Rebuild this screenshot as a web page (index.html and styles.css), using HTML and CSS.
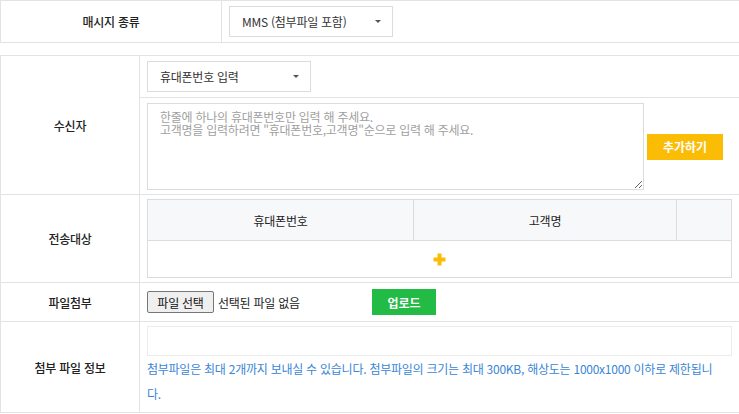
FILE: index.html
```html
<!DOCTYPE html>
<html lang="ko">
<head>
<meta charset="utf-8">
<title>메시지 발송</title>
<link rel="stylesheet" href="styles.css">
</head>
<body>
<div class="form">
  <div class="tbl tbl-top">
    <div class="th">매시지 종류</div>
    <div class="td td-center">
      <div class="select sel-type"><span>MMS (첨부파일 포함)</span><i class="caret"></i></div>
    </div>
  </div>

  <div class="tbl tbl-main">
    <div class="th">수신자</div>
    <div class="td td-split">
      <div class="sub sub-select">
        <div class="select"><span>휴대폰번호 입력</span><i class="caret"></i></div>
      </div>
      <div class="sub sub-input">
        <textarea class="numbers" placeholder="한줄에 하나의 휴대폰번호만 입력 해 주세요.&#10;고객명을 입력하려면 &quot;휴대폰번호,고객명&quot;순으로 입력 해 주세요."></textarea>
        <button class="btn btn-yellow" type="button">추가하기</button>
      </div>
    </div>

    <div class="th">전송대상</div>
    <div class="td td-target">
      <div class="target">
        <div class="gh">휴대폰번호</div>
        <div class="gh">고객명</div>
        <div class="gh gh-last"></div>
        <div class="gb">
          <svg class="plus" width="13" height="13" viewBox="0 0 13 13" aria-hidden="true"><path d="M4.5 0.5h4v4h4v4h-4v4h-4v-4h-4v-4h4z" fill="#fbbc05"/></svg>
        </div>
      </div>
    </div>

    <div class="th">파일첨부</div>
    <div class="td td-file">
      <div class="file">
        <span class="file-btn">파일 선택</span>
        <span class="file-name">선택된 파일 없음</span>
      </div>
      <button class="btn btn-green" type="button">업로드</button>
    </div>

    <div class="th">첨부 파일 정보</div>
    <div class="td td-info">
      <div class="info-box"></div>
      <p class="info">첨부파일은 최대 2개까지 보내실 수 있습니다. 첨부파일의 크기는 최대 300KB, 해상도는 1000x1000 이하로 제한됩니다.</p>
    </div>
  </div>
</div>
</body>
</html>
```

FILE: styles.css
```css
* {
  box-sizing: border-box;
}

body {
  margin: 0;
  font-family: "Noto Sans CJK KR", "Noto Sans", sans-serif;
  font-size: 12px;
  letter-spacing: -0.25px;
  color: #333;
  background: #fff;
}

.tbl {
  display: grid;
  border-top: 1px solid #e3e3e3;
  border-left: 1px solid #e3e3e3;
}

.tbl-top {
  grid-template-columns: 221px 1fr;
  height: 43px;
  border-bottom: 1px solid #e3e3e3;
}

.tbl-main {
  margin-top: 12px;
  grid-template-columns: 139px 1fr;
}

.th {
  display: flex;
  align-items: center;
  justify-content: center;
  border-right: 1px solid #e3e3e3;
  font-weight: 500;
  color: #222;
}

.tbl-main .th,
.tbl-main .td {
  border-bottom: 1px solid #e3e3e3;
}

.td {
  padding: 0 7px;
}

.td-center {
  display: flex;
  align-items: center;
}

.select {
  width: 164px;
  height: 31px;
  border: 1px solid #dcdcdc;
  display: flex;
  align-items: center;
  justify-content: space-between;
  padding: 0 11px 0 12px;
  color: #333;
  background: #fff;
}

.caret {
  width: 0;
  height: 0;
  border-left: 3px solid transparent;
  border-right: 3px solid transparent;
  border-top: 3px solid #555;
}

.td-split {
  padding: 0;
  display: flex;
  flex-direction: column;
}

.sub {
  padding: 0 7px;
}

.sub-select {
  padding-top: 5px;
  padding-bottom: 5px;
  border-bottom: 1px solid #e3e3e3;
}

.sub-input {
  display: flex;
  align-items: center;
  padding-top: 5px;
  padding-bottom: 4px;
}

.numbers {
  display: block;
  width: 497px;
  height: 87px;
  margin: 0;
  border: 1px solid #dcdcdc;
  padding: 6px 12px;
  font: inherit;
  font-size: 12px;
  line-height: 13px;
  letter-spacing: -0.25px;
  color: #333;
  resize: both;
}

.numbers::placeholder {
  color: #a0a0a0;
}

.btn {
  border: 0;
  margin: 0;
  padding: 0;
  color: #fff;
  font: inherit;
  font-weight: 700;
  font-size: 12px;
  letter-spacing: 0;
  cursor: pointer;
}

.btn-yellow {
  width: 76px;
  height: 26px;
  margin-left: 3px;
  background: #fbbc05;
}

.td-target {
  padding-top: 4px;
  padding-bottom: 4px;
}

.target {
  display: grid;
  grid-template-columns: 266px 263px 1fr;
  border: 1px solid #dcdcdc;
}

.gh {
  height: 41px;
  display: flex;
  align-items: center;
  justify-content: center;
  background: #f7f8fa;
  border-right: 1px solid #dcdcdc;
  border-bottom: 1px solid #dcdcdc;
  color: #222;
}

.gh-last {
  border-right: 0;
}

.gb {
  grid-column: 1 / -1;
  height: 36px;
  display: flex;
  align-items: center;
  justify-content: center;
}

.plus {
  display: block;
}

.td-file {
  height: 39px;
  display: flex;
  align-items: center;
}

.file {
  width: 220px;
  display: flex;
  align-items: center;
  color: #222;
}

.file-btn {
  height: 22px;
  width: 67px;
  display: flex;
  align-items: center;
  justify-content: center;
  background: #efefef;
  border: 1px solid #767676;
  border-radius: 2px;
  color: #111;
  margin-right: 4px;
}

.btn-green {
  width: 64px;
  height: 26px;
  margin-left: 5px;
  background: #22bb45;
}

.td-info {
  padding-top: 4px;
  padding-bottom: 6px;
}

.info-box {
  height: 30px;
  border: 1px solid #ececec;
}

.info {
  margin: 0;
  padding-right: 8px;
  line-height: 25px;
  color: #3a86d6;
}
```
